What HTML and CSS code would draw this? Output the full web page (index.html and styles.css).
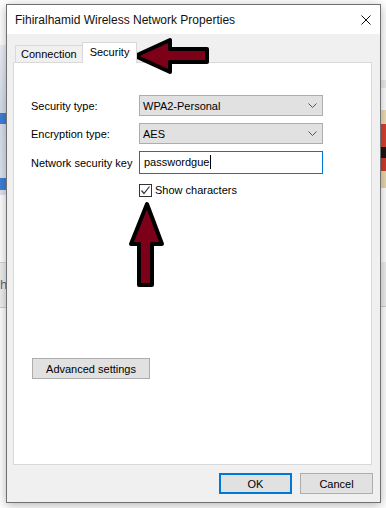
FILE: index.html
```html
<!DOCTYPE html>
<html lang="en">
<head>
  <meta charset="UTF-8">
  <title>Wireless Network Properties</title>
  <link rel="stylesheet" href="styles.css">
</head>
<body>

  <div class="backdrop">
    <div class="bg-left-panel">
      <span class="bg-bar bar-1"></span>
      <span class="bg-bar bar-2"></span>
    </div>
    <div class="bg-left-box">h</div>
    <div class="bg-right-strip"></div>
    <div class="bg-right-icon"></div>
    <div class="bg-right-box"></div>
  </div>

  <div class="window">
    <div class="titlebar">
      <span class="title">Fihiralhamid Wireless Network Properties</span>
      <svg class="close" width="10" height="10" viewBox="0 0 10 10">
        <path d="M0.5 0.5 L9.5 9.5 M9.5 0.5 L0.5 9.5" stroke="#111" stroke-width="1"/>
      </svg>
    </div>

    <div class="client">
      <div class="tabs">
        <div class="tab">Connection</div>
        <div class="tab active">Security</div>
      </div>

      <div class="panel">
        <div class="fields">
          <span class="field-label">Security type:</span>
          <div class="select">
            <span>WPA2-Personal</span>
            <svg class="chevron" width="9" height="5" viewBox="0 0 9 5"><path d="M0.5 0.5 L4.5 4.5 L8.5 0.5" fill="none" stroke="#555"/></svg>
          </div>

          <span class="field-label">Encryption type:</span>
          <div class="select">
            <span>AES</span>
            <svg class="chevron" width="9" height="5" viewBox="0 0 9 5"><path d="M0.5 0.5 L4.5 4.5 L8.5 0.5" fill="none" stroke="#555"/></svg>
          </div>

          <span class="field-label">Network security key</span>
          <div class="text-input"><span>passwordgue</span><span class="caret"></span></div>

          <span></span>
          <div class="check">
            <span class="box">
              <svg width="11" height="11" viewBox="0 0 11 11"><path d="M1.5 5.5 L4 8.5 L9.5 1.5" fill="none" stroke="#333" stroke-width="1.2"/></svg>
            </span>
            Show characters
          </div>
        </div>

        <button type="button" class="btn advanced">Advanced settings</button>
      </div>

      <div class="footer">
        <button type="button" class="btn default">OK</button>
        <button type="button" class="btn">Cancel</button>
      </div>
    </div>
  </div>

  <!-- annotation arrows drawn over the dialog -->
  <svg class="arrows" width="386" height="508" viewBox="0 0 386 508">
    <polygon points="135,56 170,40 170,49 207,49 207,62 170,62 170,72"
             fill="#7d0019" stroke="#000" stroke-width="4" stroke-linejoin="round"/>
    <polygon points="147,204 162,244 152,244 152,285 139,285 139,244 131,244"
             fill="#7d0019" stroke="#000" stroke-width="4" stroke-linejoin="round"/>
  </svg>

</body>
</html>
```

FILE: styles.css
```css
body {
  font-family: 'Liberation Sans', Arial, sans-serif;
  font-size: 11px;
  color: #000;
  background: #fff;
  margin: 0;
  width: 386px;
  height: 508px;
  overflow: hidden;
  position: relative;
}

/* desktop behind the dialog */
.backdrop {
  position: absolute;
  inset: 0;
}

.bg-left-panel {
  position: absolute;
  left: 0;
  top: 45px;
  width: 8px;
  height: 150px;
  background: linear-gradient(#eef1f6, #d7deeb 40%, #dfe5ef);
}

.bg-bar {
  position: absolute;
  left: 0;
  width: 8px;
  background: #3f7fd8;
}

.bar-1 { top: 68px; height: 11px; }
.bar-2 { top: 133px; height: 12px; }

.bg-left-box {
  position: absolute;
  left: 0;
  top: 262px;
  width: 8px;
  height: 44px;
  background: #efefef;
  border-top: 1px solid #d4d4d4;
  border-bottom: 1px solid #cfcfcf;
  color: #5a6a8a;
  font-size: 13px;
  line-height: 44px;
  overflow: hidden;
}

.bg-right-strip {
  position: absolute;
  right: 0;
  top: 80px;
  width: 6px;
  height: 8px;
  background: #ececec;
}

.bg-right-icon {
  position: absolute;
  right: 0;
  top: 110px;
  width: 6px;
  height: 78px;
  background: linear-gradient(#eedcb2 0 18%, #d9402f 18% 48%, #1e1414 48% 62%, #cf3b2b 62% 78%, #ead7aa 78%);
}

.bg-right-box {
  position: absolute;
  right: 0;
  top: 262px;
  width: 6px;
  height: 44px;
  background: #eeeeee;
  border-bottom: 1px solid #cfcfcf;
}

/* dialog */
.window {
  position: relative;
  margin: 4px 0 0 6px;
  width: 373px;
  height: 497px;
  border: 1px solid #707070;
  background: #f0f0f0;
  box-shadow: 0 2px 10px rgba(0, 0, 0, 0.3);
  display: flex;
  flex-direction: column;
}

.titlebar {
  height: 29px;
  background: #fff;
  display: flex;
  align-items: center;
  justify-content: space-between;
  padding: 0 9px 0 8px;
}

.title {
  font-size: 12px;
  color: #111;
}

.client {
  padding: 8px 6px 0 6px;
  display: flex;
  flex-direction: column;
}

.tabs {
  display: flex;
  align-items: flex-end;
  padding-left: 2px;
}

.tab {
  box-sizing: border-box;
  height: 17px;
  padding: 0 5px;
  line-height: 17px;
  border: 1px solid #d9d9d9;
  border-bottom: none;
  border-right: none;
  background: #f0f0f0;
}

.tab.active {
  position: relative;
  z-index: 1;
  height: 21px;
  margin-bottom: -1px;
  padding: 0 7px;
  line-height: 18px;
  border-right: 1px solid #d9d9d9;
  background: #fff;
}

.panel {
  box-sizing: border-box;
  height: 403px;
  margin-right: 2px;
  border: 1px solid #d9d9d9;
  background: #fff;
  padding: 32px 0 0 17px;
  display: flex;
  flex-direction: column;
  align-items: flex-start;
}

.fields {
  display: grid;
  grid-template-columns: 108px 184px;
  grid-template-rows: 21px 21px 23px 13px;
  row-gap: 7px;
  align-items: center;
}

.fields > :nth-child(6) {
  margin-top: -1px;
}

.fields > :nth-child(8) {
  margin-top: 5px;
}

.select {
  box-sizing: border-box;
  height: 21px;
  display: flex;
  align-items: center;
  justify-content: space-between;
  padding: 0 5px 0 3px;
  background: #e1e1e1;
  border: 1px solid #adadad;
}

.chevron {
  display: block;
}

.text-input {
  box-sizing: border-box;
  height: 23px;
  display: flex;
  align-items: center;
  padding-left: 4px;
  background: #fff;
  border: 1px solid #0078d7;
}

.caret {
  width: 1px;
  height: 14px;
  margin-left: 1px;
  background: #000;
}

.check {
  display: flex;
  align-items: center;
  gap: 3px;
}

.box {
  box-sizing: border-box;
  width: 13px;
  height: 13px;
  border: 1px solid #333;
  background: #fff;
  display: flex;
  align-items: center;
  justify-content: center;
}

.box svg {
  display: block;
}

.btn {
  box-sizing: border-box;
  height: 21px;
  font-family: inherit;
  font-size: 11px;
  color: #000;
  background: #e1e1e1;
  border: 1px solid #adadad;
  border-radius: 0;
  padding: 0;
}

.advanced {
  width: 118px;
  margin: 164px 0 0 1px;
}

.footer {
  display: flex;
  justify-content: flex-end;
  gap: 8px;
  margin: 8px 1px 0 0;
}

.footer .btn {
  width: 73px;
}

.btn.default {
  border: 2px solid #0078d7;
}

.arrows {
  position: absolute;
  left: 0;
  top: 0;
  pointer-events: none;
}
```
